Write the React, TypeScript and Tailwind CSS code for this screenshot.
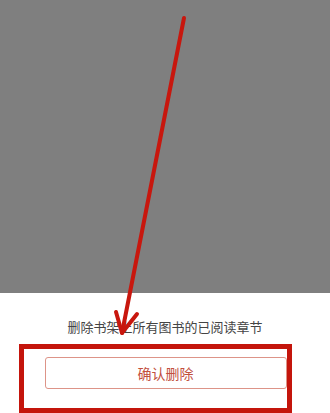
export default function App() {
  return (
    <div
      className="relative w-[330px] h-[413px] flex flex-col overflow-hidden"
      style={{ fontFamily: '"Noto Sans CJK SC", "Noto Sans", sans-serif' }}
    >
      <div className="flex-1 bg-[#7f7f7f]" />
      <div className="h-[120px] bg-white flex flex-col items-center">
        <p className="mt-[25px] text-[13px] leading-[18px] text-[#444]">删除书架上所有图书的已阅读章节</p>
        <button className="mt-[21px] ml-[1px] w-[242px] h-[32px] rounded-[3px] border border-[#dd9488] text-[14px] text-[#c2503e]">
          确认删除
        </button>
      </div>

      {/* annotation box */}
      <div className="absolute left-[19px] top-[344px] w-[273px] h-[69px] border-[5px] border-[#c4150c]" />

      {/* annotation arrow */}
      <svg className="absolute inset-0" width="330" height="413" viewBox="0 0 330 413">
        <g stroke="#c8170e" strokeWidth="4" strokeLinecap="round" strokeLinejoin="round" fill="none">
          <line x1="184" y1="18" x2="122" y2="333" />
          <polyline points="116,312 122,333 137,314" />
        </g>
      </svg>
    </div>
  )
}
